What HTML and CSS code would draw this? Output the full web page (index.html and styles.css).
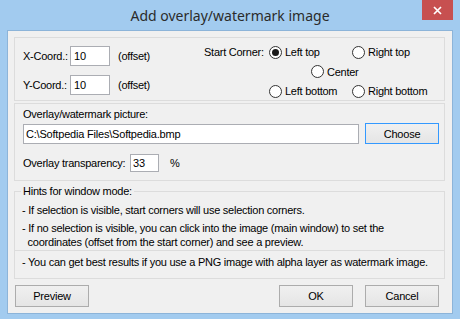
FILE: index.html
```html
<!DOCTYPE html>
<html lang="en">

<head>
    <meta charset="UTF-8">
    <meta name="viewport" content="width=device-width, initial-scale=1.0">
    <title>Add overlay/watermark image</title>
    <link rel="stylesheet" href="styles.css">
</head>

<body>
    <div class="window">
        <div class="titlebar">
            <span class="title">Add overlay/watermark image</span>
            <button class="close" title="Close">
                <svg width="9" height="9" viewBox="0 0 9 9">
                    <path d="M1 1 L8 8 M8 1 L1 8" stroke="#fff" stroke-width="1.7" fill="none" />
                </svg>
            </button>
        </div>

        <div class="client">
            <div class="panel coords">
                <div class="coord-fields">
                    <div class="field-row">
                        <span class="coord-label">X-Coord.:</span>
                        <input class="edit coord" type="text" value="10">
                        <span class="unit">(offset)</span>
                    </div>
                    <div class="field-row">
                        <span class="coord-label">Y-Coord.:</span>
                        <input class="edit coord" type="text" value="10">
                        <span class="unit">(offset)</span>
                    </div>
                </div>
                <div class="corner">
                    <span class="corner-label">Start Corner:</span>
                    <label class="radio left-top"><input type="radio" name="corner" checked>Left top</label>
                    <label class="radio right-top"><input type="radio" name="corner">Right top</label>
                    <label class="radio center"><input type="radio" name="corner">Center</label>
                    <label class="radio left-bottom"><input type="radio" name="corner">Left bottom</label>
                    <label class="radio right-bottom"><input type="radio" name="corner">Right bottom</label>
                </div>
            </div>

            <div class="panel picture">
                <div class="picture-label">Overlay/watermark picture:</div>
                <div class="path-row">
                    <input class="edit path" type="text" value="C:\Softpedia Files\Softpedia.bmp">
                    <button class="btn default">Choose</button>
                </div>
                <div class="field-row transparency">
                    <span class="transparency-label">Overlay transparency:</span>
                    <input class="edit percent" type="text" value="33">
                    <span class="unit">%</span>
                </div>
            </div>

            <fieldset class="hints">
                <legend>Hints for window mode:</legend>
                <p>- If selection is visible, start corners will use selection corners.</p>
                <p>- If no selection is visible, you can click into the image (main window) to set the<br>
                    &nbsp;&nbsp;coordinates (offset from the start corner) and see a preview.</p>
            </fieldset>

            <div class="panel tip">
                <p>- You can get best results if you use a PNG image with alpha layer as watermark image.</p>
            </div>

            <div class="buttons">
                <button class="btn">Preview</button>
                <div class="button-group">
                    <button class="btn">OK</button>
                    <button class="btn">Cancel</button>
                </div>
            </div>
        </div>
    </div>
</body>

</html>
```

FILE: styles.css
```css
body {
    margin: 0;
    background-color: #a2cbef;
    font-family: "Liberation Sans", Arial, sans-serif;
    font-size: 11px;
    letter-spacing: -0.25px;
    color: #000;
    white-space: nowrap;
}

.window {
    width: 460px;
    height: 319px;
    box-sizing: border-box;
    padding: 0 7px 5px 7px;
    background-color: #a2cbef;
    display: flex;
    flex-direction: column;
}

.titlebar {
    position: relative;
    height: 30px;
    display: flex;
    align-items: center;
    justify-content: center;
}

.title {
    font-family: "Noto Sans", "Open Sans", sans-serif;
    font-size: 14px;
    letter-spacing: 0;
    color: #2b2b2b;
    margin-top: 1px;
}

.close {
    position: absolute;
    top: 0;
    right: 0;
    width: 31px;
    height: 20px;
    border: none;
    padding: 0;
    background-color: #c75050;
    display: flex;
    align-items: center;
    justify-content: center;
}

.client {
    flex: 1;
    border: 1px solid #8cb4d9;
    background-color: #f0f0f0;
    padding: 6px 7px 0 6px;
    display: flex;
    flex-direction: column;
}

.panel {
    box-sizing: border-box;
    border: 1px solid #dcdcdc;
}

/* coordinates + start corner */
.coords {
    height: 64px;
    padding: 4px 0 0 8px;
    display: flex;
}

.coord-fields {
    width: 181px;
    margin-top: 4px;
    display: flex;
    flex-direction: column;
    gap: 9px;
}

.field-row {
    display: flex;
    align-items: center;
}

.coord-label {
    width: 47px;
}

.edit {
    box-sizing: border-box;
    height: 20px;
    margin: 0;
    padding: 0 2px;
    border: 1px solid #abadb3;
    background-color: #fff;
    font-family: "Liberation Sans", Arial, sans-serif;
    font-size: 11px;
    letter-spacing: -0.2px;
    color: #000;
    outline: none;
}

.coord {
    width: 40px;
    padding-left: 3px;
}

.unit {
    margin-left: 8px;
}

.corner {
    display: grid;
    grid-template-columns: 65px 83px auto;
    grid-template-rows: 20px 19px 20px;
    align-items: center;
}

.corner-label {
    grid-column: 1;
    grid-row: 1;
}

.radio {
    display: flex;
    align-items: center;
    gap: 3px;
}

.radio input {
    appearance: none;
    -webkit-appearance: none;
    width: 13px;
    height: 13px;
    margin: 0;
    border: 1px solid #333;
    border-radius: 50%;
    background-color: #fff;
    display: flex;
    align-items: center;
    justify-content: center;
}

.radio input:checked::after {
    content: "";
    width: 7px;
    height: 7px;
    border-radius: 50%;
    background-color: #1a1a1a;
}

.left-top { grid-column: 2; grid-row: 1; }
.right-top { grid-column: 3; grid-row: 1; }
.center { grid-column: 2 / 4; grid-row: 2; margin-left: 42px; }
.left-bottom { grid-column: 2; grid-row: 3; }
.right-bottom { grid-column: 3; grid-row: 3; }

/* picture */
.picture {
    height: 78px;
    margin-top: 2px;
    padding: 3px 0 0 8px;
}

.picture-label {
    line-height: 14px;
}

.path-row {
    height: 21px;
    margin-top: 2px;
    display: flex;
    align-items: center;
    gap: 6px;
}

.path {
    width: 336px;
}

.transparency {
    height: 18px;
    margin-top: 10px;
}

.transparency-label {
    width: 107px;
}

.percent {
    width: 29px;
    height: 18px;
}

.transparency .unit {
    margin-left: 11px;
}

/* buttons */
.btn {
    box-sizing: border-box;
    width: 74px;
    height: 22px;
    margin: 0;
    padding: 0;
    border: 1px solid #acacac;
    background: linear-gradient(#f0f0f0, #e5e5e5);
    font-family: "Liberation Sans", Arial, sans-serif;
    font-size: 11px;
    letter-spacing: -0.2px;
    color: #000;
}

.btn.default {
    height: 21px;
    border-color: #3399ff;
}

/* hints */
.hints {
    margin: 3px 0 0 0;
    padding: 5px 6px 1px 7px;
    border: 1px solid #dcdcdc;
}

.hints legend {
    padding: 0 2px;
    margin-left: -1px;
    line-height: 14px;
}

.hints p,
.tip p {
    margin: 0;
    line-height: 14px;
}

.hints p + p {
    margin-top: 4px;
}

.tip {
    height: 28px;
    border-top: none;
    padding: 4px 0 0 7px;
}

.buttons {
    margin-top: 6px;
    padding: 0 6px 0 1px;
    display: flex;
    justify-content: space-between;
}

.button-group {
    display: flex;
    gap: 12px;
}
```
